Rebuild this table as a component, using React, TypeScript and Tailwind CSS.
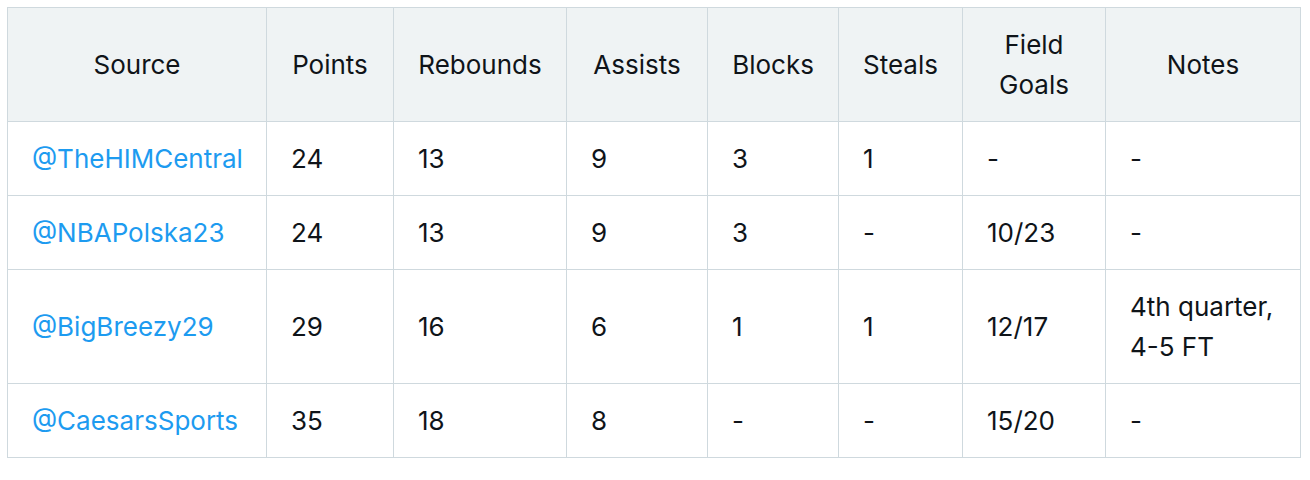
import React from 'react'

type Row = {
  source: string
  points: string
  rebounds: string
  assists: string
  blocks: string
  steals: string
  fg: string
  notes: string[]
}

const rows: Row[] = [
  { source: '@TheHIMCentral', points: '24', rebounds: '13', assists: '9', blocks: '3', steals: '1', fg: '-', notes: ['-'] },
  { source: '@NBAPolska23', points: '24', rebounds: '13', assists: '9', blocks: '3', steals: '-', fg: '10/23', notes: ['-'] },
  { source: '@BigBreezy29', points: '29', rebounds: '16', assists: '6', blocks: '1', steals: '1', fg: '12/17', notes: ['4th quarter,', '4-5 FT'] },
  { source: '@CaesarsSports', points: '35', rebounds: '18', assists: '8', blocks: '-', steals: '-', fg: '15/20', notes: ['-'] },
]

const widths = ['w-[259px]', 'w-[127px]', 'w-[173px]', 'w-[141px]', 'w-[131px]', 'w-[124px]', 'w-[143px]', 'w-[195px]']

const th = 'border border-[#cfd9de] px-6 py-[16.5px] text-center font-normal align-middle'
const td = 'border border-[#cfd9de] px-6 py-[16.5px] text-left align-middle'

export default function App() {
  return (
    <div className="bg-white min-h-[480px] pl-[7px] pt-[7px] font-['Inter','Noto_Sans',sans-serif] text-[#0f1419] text-[26px] leading-[40px]">
      <table className="table-fixed border-collapse w-[1293px]">
        <colgroup>
          {widths.map((w, i) => <col key={i} className={w} />)}
        </colgroup>
        <thead>
          <tr className="bg-[#eff3f4]">
            <th className={th}>Source</th>
            <th className={th}>Points</th>
            <th className={th}>Rebounds</th>
            <th className={th}>Assists</th>
            <th className={th}>Blocks</th>
            <th className={th}>Steals</th>
            <th className={th}>Field<br />Goals</th>
            <th className={th}>Notes</th>
          </tr>
        </thead>
        <tbody>
          {rows.map(r => (
            <tr key={r.source}>
              <td className={td}><span className="text-[#1d9bf0]">{r.source}</span></td>
              <td className={td}>{r.points}</td>
              <td className={td}>{r.rebounds}</td>
              <td className={td}>{r.assists}</td>
              <td className={td}>{r.blocks}</td>
              <td className={td}>{r.steals}</td>
              <td className={td}>{r.fg}</td>
              <td className={td}>
                {r.notes.map((n, i) => <div key={i}>{n}</div>)}
              </td>
            </tr>
          ))}
        </tbody>
      </table>
    </div>
  )
}
